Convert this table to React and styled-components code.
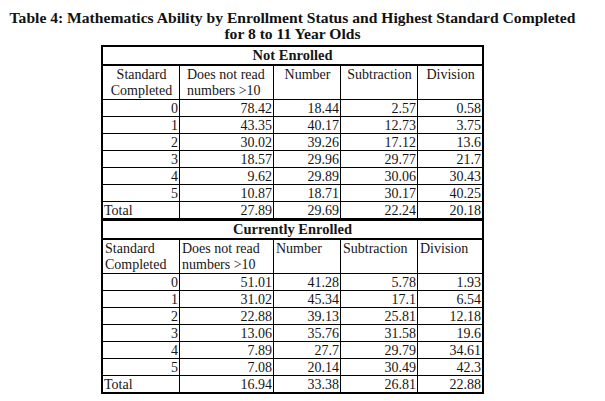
import React from "react";
import styled, { createGlobalStyle } from "styled-components";

const GlobalStyle = createGlobalStyle`
  html, body {
    margin: 0;
    padding: 0;
    background: #fff;
  }
  body {
    font-family: "Liberation Serif", "Times New Roman", serif;
    color: #161616;
  }
`;

const colWidths = [76, 94, 67, 77, 65];

const notEnrolled = [
  ["0", "78.42", "18.44", "2.57", "0.58"],
  ["1", "43.35", "40.17", "12.73", "3.75"],
  ["2", "30.02", "39.26", "17.12", "13.6"],
  ["3", "18.57", "29.96", "29.77", "21.7"],
  ["4", "9.62", "29.89", "30.06", "30.43"],
  ["5", "10.87", "18.71", "30.17", "40.25"],
  ["Total", "27.89", "29.69", "22.24", "20.18"],
];

const enrolled = [
  ["0", "51.01", "41.28", "5.78", "1.93"],
  ["1", "31.02", "45.34", "17.1", "6.54"],
  ["2", "22.88", "39.13", "25.81", "12.18"],
  ["3", "13.06", "35.76", "31.58", "19.6"],
  ["4", "7.89", "27.7", "29.79", "34.61"],
  ["5", "7.08", "20.14", "30.49", "42.3"],
  ["Total", "16.94", "33.38", "26.81", "22.88"],
];

export default function App() {
  return (
    <>
      <GlobalStyle />
      <Page>
        <Title>
          Table 4: Mathematics Ability by Enrollment Status and Highest Standard Completed
          <br />
          for 8 to 11 Year Olds
        </Title>
        <Section title="Not Enrolled" rows={notEnrolled} centered />
        <Section title="Currently Enrolled" rows={enrolled} $second />
      </Page>
    </>
  );
}

function Section({ title, rows, centered, $second }) {
  const heads = [
    ["Standard", "Completed"],
    ["Does not read", "numbers >10"],
    ["Number"],
    ["Subtraction"],
    ["Division"],
  ];
  return (
    <Table $second={$second}>
      <colgroup>
        {colWidths.map((w, i) => (
          <col key={i} style={{ width: w }} />
        ))}
      </colgroup>
      <tbody>
        <tr>
          <SectionCell colSpan={5}>{title}</SectionCell>
        </tr>
        <tr>
          {heads.map((lines, i) => (
            <HeadCell
              key={i}
              $align={centered && i !== 1 ? "center" : "left"}
              $indent={centered && i === 1 ? 7 : 2}
            >
              {lines.map((l, j) => (
                <HeadLine key={j}>{l}</HeadLine>
              ))}
            </HeadCell>
          ))}
        </tr>
        {rows.map((row) => (
          <tr key={row[0]}>
            {row.map((v, i) => (
              <DataCell key={i} $left={v === "Total"}>
                {v}
              </DataCell>
            ))}
          </tr>
        ))}
      </tbody>
    </Table>
  );
}

const Page = styled.div`
  width: 585px;
  padding-top: 10px;
`;

const Title = styled.h1`
  margin: 0;
  padding-bottom: 3px;
  font-size: 15.6px;
  line-height: 16px;
  font-weight: bold;
  text-align: center;
  color: #111;
`;

const Table = styled.table`
  table-layout: fixed;
  width: 383px;
  margin-left: 101px;
  border-collapse: separate;
  border-spacing: 0;
  border: 2px solid #000;
  border-top-width: ${(p) => (p.$second ? "1px" : "2px")};

  td,
  th {
    box-sizing: border-box;
    font-size: 14px;
  }
  td + td,
  th + th {
    border-left: 1px solid #000;
  }
`;

const SectionCell = styled.th`
  padding: 0;
  font-size: 14.5px !important;
  line-height: 17px;
  font-weight: bold;
  text-align: center;
  border-bottom: 2px solid #000;
`;

const HeadCell = styled.th`
  padding: 1px 1px 0 ${(p) => p.$indent}px;
  height: 33px;
  vertical-align: top;
  font-weight: normal;
  line-height: 16px;
  text-align: ${(p) => p.$align};
  white-space: nowrap;
  overflow: hidden;
`;

const HeadLine = styled.div``;

const DataCell = styled.td`
  border-top: 1px solid #000;
  padding: 1px 1px 0 ${(p) => (p.$left ? "1px" : "0")};
  line-height: 15px;
  text-align: ${(p) => (p.$left ? "left" : "right")};
  white-space: nowrap;
`;
